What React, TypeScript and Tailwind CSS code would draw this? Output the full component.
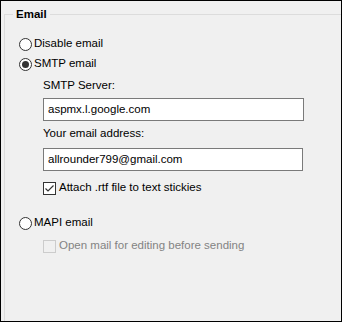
import React from "react";

function Radio({ checked }: { checked?: boolean }) {
  return (
    <span className="w-[13px] h-[13px] rounded-full border border-[#333333] bg-white flex items-center justify-center shrink-0">
      {checked && <span className="w-[7px] h-[7px] rounded-full bg-[#333333]" />}
    </span>
  );
}

function Check({ checked, disabled }: { checked?: boolean; disabled?: boolean }) {
  return (
    <span
      className={
        disabled
          ? "w-[13px] h-[13px] border border-[#cccccc] bg-[#f0f0f0] shrink-0"
          : "w-[13px] h-[13px] border border-[#333333] bg-white shrink-0 flex items-center justify-center"
      }
    >
      {checked && (
        <svg width="11" height="11" viewBox="0 0 11 11">
          <path d="M1.5 5.5 L4 8 L9.5 2.5" fill="none" stroke="#333333" strokeWidth="1.2" />
        </svg>
      )}
    </span>
  );
}

export default function App() {
  return (
    <div
      className="w-[342px] h-[322px] border border-black bg-[#f0f0f0] flex flex-col text-[11.5px] text-black relative"
      style={{ fontFamily: '"Liberation Sans", Arial, sans-serif' }}
    >
      <div className="ml-[3px] mt-[13px] flex-1 border-l border-t border-[#dcdcdc] flex flex-col relative">
        <div className="absolute left-[8px] top-[-11px] px-[3px] bg-[#f0f0f0] font-bold leading-[20px]">Email</div>
        <div className="mt-[19px] h-[20px] ml-[14px] flex items-center gap-[2px]">
          <Radio />
          <span>Disable email</span>
        </div>
        <div className="h-[20px] ml-[14px] flex items-center gap-[2px]">
          <Radio checked />
          <span>SMTP email</span>
        </div>
        <div className="mt-[2px] h-[20px] ml-[38px] flex items-center">SMTP Server:</div>
        <div className="mt-[2px] ml-[38px] w-[261px] h-[23px] border border-[#7a7a7a] bg-white flex items-center pl-[4px]">
          aspmx.l.google.com
        </div>
        <div className="mt-[3px] h-[20px] ml-[38px] flex items-center">Your email address:</div>
        <div className="mt-[4px] ml-[38px] w-[260px] h-[23px] border border-[#7a7a7a] bg-white flex items-center pl-[4px]">
          allrounder799@gmail.com
        </div>
        <div className="mt-[7px] h-[20px] ml-[38px] flex items-center gap-[3px]">
          <Check checked />
          <span>Attach .rtf file to text stickies</span>
        </div>
        <div className="mt-[15px] h-[20px] ml-[14px] flex items-center gap-[2px]">
          <Radio />
          <span>MAPI email</span>
        </div>
        <div className="mt-[3px] h-[20px] ml-[38px] flex items-center gap-[3px] text-[#838383]">
          <Check disabled />
          <span>Open mail for editing before sending</span>
        </div>
      </div>
    </div>
  );
}
